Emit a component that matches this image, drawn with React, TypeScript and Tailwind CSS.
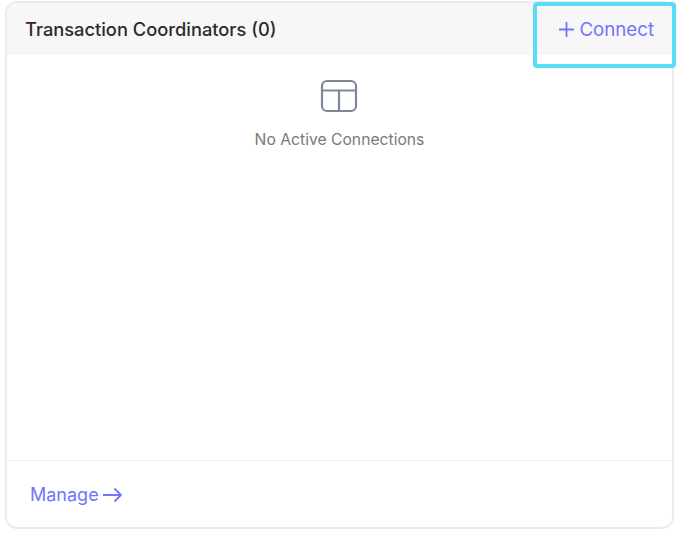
const LayoutIcon = () => (
  <svg width="38" height="34" viewBox="0 0 38 34" fill="none" stroke="#7f879b" strokeWidth="2.2">
    <rect x="2" y="2" width="34" height="30" rx="5" />
    <path d="M2 11.5H36M19 11.5V32" />
  </svg>
);

const App = () => {
  return (
    <div className="h-[544px] w-[681px] bg-white pl-[5px] pt-px font-['Inter',sans-serif]">
      <div className="flex h-[528px] w-[669px] flex-col overflow-hidden rounded-xl border-2 border-[#ececec]">
        {/* Header */}
        <div className="flex h-[52px] shrink-0 items-center justify-between bg-[#f7f7f7] pl-[18px] pr-[18px] pt-[2px]">
          <h2 className="text-[18.3px] font-medium text-[#2b2b2f]">Transaction Coordinators (0)</h2>
          <button className="flex items-center gap-[5px] text-[18.7px] text-[#7572fb]">
            <svg width="15" height="15" viewBox="0 0 15 15" fill="none" stroke="currentColor" strokeWidth="1.8">
              <path d="M7.5 0V15M0 7.5H15" />
            </svg>
            Connect
          </button>
        </div>

        {/* Empty state */}
        <div className="flex flex-1 flex-col items-center pr-[2px] pt-[24px]">
          <LayoutIcon />
          <p className="ml-[2px] mt-[15px] text-[15.7px] text-[#7a7a7a]">No Active Connections</p>
        </div>

        {/* Footer */}
        <div className="flex h-[67px] shrink-0 items-center border-t border-[#efefef] pl-[23px] pt-[2px]">
          <a className="flex items-center gap-[3px] text-lg text-[#7572fb]">
            Manage
            <svg width="20" height="16" viewBox="0 0 20 16" fill="none" stroke="currentColor" strokeWidth="1.8">
              <path d="M1 8H19M12.5 1.5L19 8L12.5 14.5" />
            </svg>
          </a>
        </div>
      </div>

      {/* Focus highlight */}
      <div className="absolute left-[533px] top-[2px] h-[66px] w-[143px] rounded-sm border-[4px] border-[#5adcf5]" />
    </div>
  );
};

export default App;
